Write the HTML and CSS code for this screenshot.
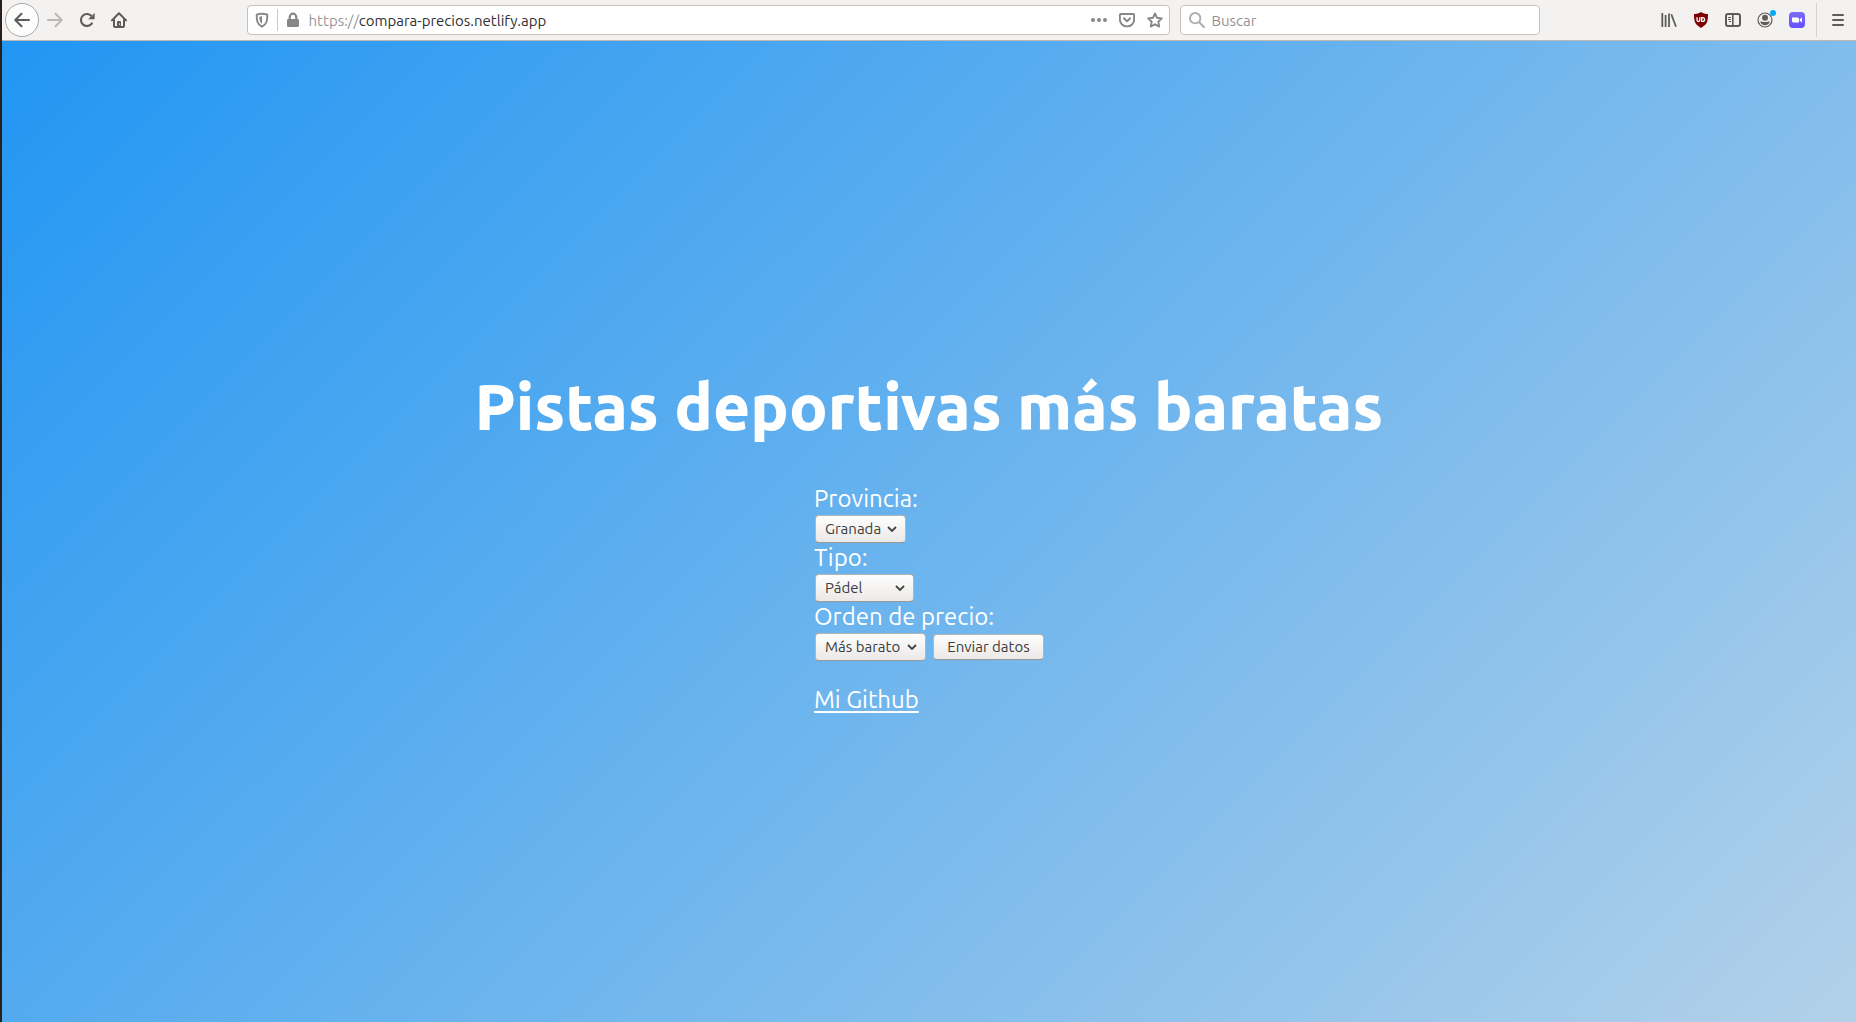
FILE: index.html
```html
<!DOCTYPE html>
<html lang="es">
<head>
<meta charset="utf-8">
<title>Pistas deportivas más baratas</title>
<link rel="stylesheet" href="styles.css">
</head>
<body>
<div class="window">
  <header class="toolbar">
    <button class="tool back" type="button" aria-label="Atrás"><svg class="icon" viewBox="0 0 16 16"><path d="M15 8H1.5M7.5 1.8 1.3 8l6.2 6.2" fill="none" stroke="currentColor" stroke-width="2" stroke-linecap="round" stroke-linejoin="round"/></svg></button>
    <button class="tool forward" type="button" aria-label="Adelante"><svg class="icon" viewBox="0 0 16 16"><path d="M1 8h13.5M8.5 1.8 14.7 8l-6.2 6.2" fill="none" stroke="currentColor" stroke-width="2" stroke-linecap="round" stroke-linejoin="round"/></svg></button>
    <button class="tool" type="button" aria-label="Recargar"><svg class="icon" viewBox="0 0 16 16"><path d="M12.9 11.3A6 6 0 1 1 12.6 4.2" fill="none" stroke="currentColor" stroke-width="2.1" stroke-linecap="round"/><path d="M15.6 1v6.2H9.3L11.4 5l2-.4.3-2z" fill="currentColor"/></svg></button>
    <button class="tool" type="button" aria-label="Inicio"><svg class="icon" viewBox="0 0 16 16"><path d="M.9 8.4 8 1.3l7.1 7.1M3 7.5V14a1 1 0 0 0 1 1h8a1 1 0 0 0 1-1V7.5" fill="none" stroke="currentColor" stroke-width="2" stroke-linecap="round" stroke-linejoin="round"/><path d="M6 15V10a1 1 0 0 1 1-1h2a1 1 0 0 1 1 1v5z" fill="currentColor"/><path d="M8.6 11.3v1.6" stroke="#f3f2f1"/></svg></button>
    <div class="spring"></div>
    <div class="field address">
      <svg class="icon" viewBox="0 0 16 16"><path d="M8 1.7c2 0 4 .5 5.3 1 .1 5.8-.5 9.6-5.3 11.9C3.2 12.3 2.6 8.5 2.7 2.7 4 2.2 6 1.7 8 1.7z" fill="none" stroke="currentColor" stroke-width="1.9" stroke-linejoin="round"/><path d="M8 4.3v7.5C5.8 10.3 5.3 8 5.3 4.8A9 9 0 0 1 8 4.3z" fill="currentColor"/></svg>
      <span class="divider"></span>
      <svg class="icon lock" viewBox="0 0 16 16"><path d="M4.7 8V5a3.3 3.3 0 0 1 6.6 0v3" fill="none" stroke="currentColor" stroke-width="2.2"/><rect x="2" y="7" width="12" height="8" rx="1.3" fill="currentColor"/></svg>
      <span class="url">https://<span class="host">compara-precios.netlify.app</span></span>
      <svg class="icon" viewBox="0 0 16 16" fill="currentColor"><circle cx="2" cy="8" r="2"/><circle cx="8" cy="8" r="2"/><circle cx="14" cy="8" r="2"/></svg>
      <svg class="icon" viewBox="0 0 16 16" fill="none" stroke="currentColor" stroke-width="1.9" stroke-linecap="round" stroke-linejoin="round"><path d="M1.9 2h12.2a1 1 0 0 1 1 1v4.7a7.1 6.7 0 0 1-14.2 0V3a1 1 0 0 1 1-1z"/><path d="m4.9 6.3 3.1 3 3.1-3"/></svg>
      <svg class="icon" viewBox="0 0 16 16"><path d="m8 1.5 2 4.3 4.8.6-3.5 3.3.9 4.9L8 12.2l-4.2 2.4.9-4.9L1.2 6.4 6 5.8z" fill="none" stroke="currentColor" stroke-width="1.9" stroke-linejoin="round"/></svg>
    </div>
    <label class="field search">
      <svg class="icon glass" viewBox="0 0 16 16" fill="none" stroke="currentColor" stroke-linecap="round"><circle cx="6.2" cy="6.2" r="5.2" stroke-width="1.9"/><path d="m10.2 10.2 4.8 4.8" stroke-width="2"/></svg>
      <input class="search-input" type="search" placeholder="Buscar" aria-label="Buscar">
    </label>
    <div class="spring"></div>
    <button class="tool" type="button" aria-label="Biblioteca"><svg class="icon" viewBox="0 0 16 16" fill="none" stroke="currentColor" stroke-width="1.8"><path d="M1.3 1v14M4.6 3v12M8 1.5V15M10.3 2.3l4.7 12.5"/></svg></button>
    <button class="tool" type="button" aria-label="uBlock Origin"><svg class="icon" viewBox="0 0 16 16"><path d="M8 0c2.3 1.6 4.5 2 7 2.1 0 7.4-.8 10.4-7 13.9C1.8 12.5 1 9.5 1 2.1 3.5 2 5.7 1.6 8 0z" fill="#800000"/><path d="M4 5.2v2.9a1.4 1.4 0 0 0 2.8 0V5.2M8.7 5.6v3.8h1a1.9 1.9 0 0 0 0-3.8z" fill="none" stroke="#fff" stroke-width="1.3"/></svg></button>
    <button class="tool" type="button" aria-label="Barra lateral"><svg class="icon" viewBox="0 0 16 16" fill="none" stroke="currentColor"><rect x="1" y="2" width="14" height="12" rx="2" stroke-width="2"/><path d="M7.8 2v12" stroke-width="1.6"/><path d="M3 5.5h3M3 7.5h3M4 9.5h2"/></svg></button>
    <button class="tool account" type="button" aria-label="Cuenta"><svg class="icon" viewBox="0 0 16 16"><circle cx="8" cy="8" r="7" fill="none" stroke="currentColor" stroke-width="1.2"/><circle cx="8" cy="5.8" r="3" fill="currentColor"/><path d="M3.2 9.7c1.3-.6 1.7.4 4.8.4s3.5-1 4.8-.4C12 12 10.3 13.2 8 13.2S4 12 3.2 9.7z" fill="currentColor"/></svg><span class="badge"></span></button>
    <button class="tool" type="button" aria-label="Zoom"><svg class="icon" viewBox="0 0 16 16"><defs><linearGradient id="violet" x2="0" y2="1"><stop stop-color="#7b6cf5"/><stop offset="1" stop-color="#6550ff"/></linearGradient></defs><rect width="16" height="16" rx="4" fill="url(#violet)"/><path d="M3 5.5h5.5a1.5 1.5 0 0 1 1.5 1.5v3.5H4.5A1.5 1.5 0 0 1 3 9zM10.7 7.2 13 5.5v5l-2.3-1.7z" fill="#fff"/></svg></button>
    <span class="separator"></span>
    <button class="tool" type="button" aria-label="Menú"><svg class="icon" viewBox="0 0 16 16"><path d="M3 3h10M3 8h10M3 13h10" stroke="currentColor" stroke-width="2" stroke-linecap="round"/></svg></button>
  </header>
  <main class="page">
    <h1 class="title">Pistas deportivas más baratas</h1>
    <form class="form">
      <label class="label" for="provincia">Provincia:</label>
      <div class="row"><select class="control select province" id="provincia"><option>Granada</option></select></div>
      <label class="label" for="tipo">Tipo:</label>
      <div class="row"><select class="control select kind" id="tipo"><option>Pádel</option></select></div>
      <label class="label" for="orden">Orden de precio:</label>
      <div class="row">
        <select class="control select order" id="orden"><option>Más barato</option></select>
        <button class="control submit" type="button">Enviar datos</button>
      </div>
      <a class="link" href="#github">Mi Github</a>
    </form>
  </main>
</div>
</body>
</html>
```
FILE: styles.css
```css
* { box-sizing: border-box; }

body {
  margin: 0;
  font-family: "Ubuntu", "Noto Sans", sans-serif;
}

button, input, select { font: inherit; }

.window {
  display: flex;
  flex-direction: column;
  min-height: 100vh;
  border-left: 2px solid #28201c;
}

.toolbar {
  display: flex;
  align-items: center;
  height: 41px;
  padding: 0 2px 0 3px;
  background: #f3f2f1;
  border-bottom: 1px solid #bdb8b2;
  color: #5d5c59;
}

.icon {
  display: block;
  flex: none;
  width: 16px;
  height: 16px;
}

.tool {
  display: flex;
  flex: none;
  align-items: center;
  justify-content: center;
  width: 32px;
  height: 32px;
  padding: 0;
  border: 0;
  background: none;
  color: inherit;
}

.back {
  width: 34px;
  height: 34px;
  border: 1px solid #aaa9a7;
  border-radius: 50%;
  background: #fcfcfc;
}

.forward { color: #b9b8b6; }

.account { position: relative; }

.badge {
  position: absolute;
  top: 6px;
  right: 5px;
  width: 6px;
  height: 6px;
  border-radius: 50%;
  background: #00adf5;
}

.separator {
  width: 1px;
  height: 34px;
  margin: 0 5px 0 3px;
  background: #d5d3d0;
}

.spring { flex: 113; }

.field {
  display: flex;
  align-items: center;
  height: 30px;
  border: 1px solid #c6c3bf;
  border-radius: 4px;
  background: #fff;
  color: #868686;
  font-size: 15px;
}

.address {
  flex: 922;
  gap: 12px;
  padding: 0 6px;
}

.divider {
  width: 1px;
  height: 22px;
  margin: 0 -5px;
  background: #c9c9c9;
}

.lock { margin-right: -4px; }

.url {
  flex: 1;
  color: #98989b;
}

.host { color: #303033; }

.search {
  width: 360px;
  margin: 0 1px 0 10px;
  gap: 6px;
  padding: 0 8px;
}

.glass { color: #adadad; }

.search-input {
  flex: 1;
  min-width: 0;
  padding: 0;
  border: 0;
  outline: 0;
  background: none;
}

.search-input::placeholder { color: #929294; }

.page {
  display: flex;
  flex: 1;
  flex-direction: column;
  align-items: center;
  justify-content: center;
  padding: 24px;
  background: linear-gradient(135deg, #2196f3, #b3d1e9);
  color: #fff;
}

.title {
  margin: 20px 0 42px;
  font-size: 64px;
  font-weight: 800;
  line-height: 74px;
  text-align: center;
}

.form {
  display: flex;
  flex-direction: column;
  align-items: flex-start;
  width: 230px;
  font-size: 24px;
  line-height: 28px;
}

.row {
  display: flex;
  align-items: center;
  gap: 7px;
  height: 31px;
  padding-left: 1px;
}

.label, .link { white-space: nowrap; }

.control {
  height: 28px;
  border: 1px solid #b9b4ae;
  border-bottom-color: #9d9892;
  border-radius: 4px;
  background: linear-gradient(#fefefe, #ebe9e7);
  color: #3c3c3c;
  font-size: 15px;
  line-height: 20px;
  white-space: nowrap;
}

.select {
  appearance: none;
  padding: 0 9px;
  /* Chevron at the right edge, over the button gradient. */
  background:
    url("data:image/svg+xml,%3Csvg xmlns='http://www.w3.org/2000/svg' width='10' height='6'%3E%3Cpath d='M1 1l4 4 4-4' fill='none' stroke='%23444' stroke-width='1.8'/%3E%3C/svg%3E") no-repeat right 8px center,
    linear-gradient(#fefefe, #ebe9e7);
}

.province { width: 91px; }
.kind { width: 99px; }
.order { width: 111px; }

.submit {
  width: 111px;
  height: 26px;
  padding: 0;
}

.link {
  margin-top: 24px;
  color: inherit;
  text-decoration-thickness: 2px;
  text-underline-offset: 3px;
}
```
